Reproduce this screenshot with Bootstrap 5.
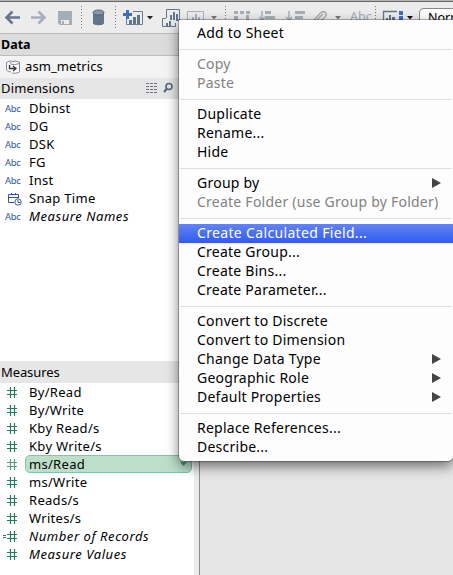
<!DOCTYPE html>
<html lang="en">
<head>
<meta charset="utf-8">
<title>Data pane</title>
<link href="https://cdn.jsdelivr.net/npm/bootstrap@5.3.0/dist/css/bootstrap.min.css" rel="stylesheet">
<style>
body{font-family:"Noto Sans","Open Sans",sans-serif;font-size:13px;line-height:18px;color:#000;background:#e6e6e6;width:453px;height:575px}
svg{display:block;flex:none}
.toolbar{height:34px;background:#ececec;border-top:1px solid #b4b4b0;border-bottom:1px solid #bcbcbc;box-shadow:inset 0 1px #686868}
.pane{width:200px;height:541px;background:#fff;border-right:1px solid #8c8c8c}
.pane-inner{width:194px}
.pane-title{height:22px;background:#dcdcdc;border-bottom:1px solid #bdbdbd;font-size:12.5px;padding-left:1px}
.pane-title span{margin-top:1px}
.source{height:22px;background:#f3f3f3;padding-left:6px}
.source-name{margin:-2px 0 0 4px;letter-spacing:.1px}
.section-title{height:21px;background:#e6e6e6;padding:0 0 2px 1px;width:199px;letter-spacing:.15px}
.measures-title{height:22px;padding-bottom:0;letter-spacing:-.1px}
.dimensions{height:262px}
.field{height:18px}
.kind{width:25px;flex:none;color:#31589c}
.abc{font-size:9.5px;padding-left:5px;letter-spacing:-.3px;line-height:19px}
.field-name{height:18px;line-height:19px;padding-left:4px;border:1px solid transparent;border-width:0 0 0 1px;margin-left:-1px;white-space:nowrap;letter-spacing:.3px}
.field-name.fst-italic{letter-spacing:.56px}
.picked{width:167px;margin-left:0;padding-left:3px;border:1px solid #7bc8ae;border-radius:5px;background:#bddec9;line-height:17px}
.gutter{width:5px;background:#ebebeb;height:192px}
.ctx{left:179px;top:20px;width:274px;height:441px;padding:4px 0;background:#fdfdfd;border-radius:0 0 5px 5px;box-shadow:0 0 0 1px rgba(0,0,0,.25),0 5px 13px rgba(0,0,0,.55);font-size:14px;line-height:17px;letter-spacing:.24px}
.ctx-item{height:19px;padding:0 12px 0 18px;white-space:nowrap}
.ctx-off{color:#828282}
.ctx-on{background:linear-gradient(#6384f1,#315bee);color:#fff;letter-spacing:.34px}
.ctx-rule{height:1px;margin:6px 1px 5px;background:#dedede}
.zoom-box{left:419px;top:7px;width:34px;height:24px;background:#fff;border:1px solid #888;border-right:0;border-radius:5px 0 0 5px;padding:0 0 0 8px;font-size:12.5px;line-height:18px;overflow:hidden}
.tool-abc{left:350px;top:7px;font-size:12.5px;color:#a2abb6}
</style>
</head>
<body class="position-relative overflow-hidden">
<header class="toolbar position-relative">
<svg width="453" height="32" viewBox="0 1 453 32">
<g fill="none" stroke="#66788e" stroke-width="2.6"><path d="M6 17.5H20M12.5 11.5L6.5 17.5L12.5 23.5"/><path stroke="#a5afba" d="M45 17.5H31M38.500 11.5L44.500 17.5L38.500 23.5"/></g>
<path fill="#a4aeb9" d="M58 11H72V25H60L58 23Z"/><path fill="#ececec" d="M61 20H69V24H61Z"/><path fill="#a4aeb9" d="M62 21H64V24H62Z"/>
<path fill="#64758a" d="M93 12V23C93 26 104 26 104 23V12Z"/><ellipse cx="98.500" cy="12.500" rx="5.500" ry="2.500" fill="#8996a8" stroke="#56677c"/>
<g stroke="#777" stroke-dasharray="1 2"><path d="M81.500 6V28M115.500 6V28M225.500 6V28M375.500 6V28"/></g>
<path fill="none" stroke="#6e7e92" d="M133 11.500H142.500V24.500H126.500V19"/><path fill="#64758a" d="M129 20h3v4h-3zM133 17h3v7h-3zM137 15h3v9h-3z"/><path fill="#3e70b7" d="M126 10h3v3h3v3h-3v3h-3v-3h-3v-3h3z"/>
<path fill="#222" d="M147 16h6l-3 3.500z"/>
<path fill="none" stroke="#64758a" d="M166.500 18V9.500H179.500V20.500H176M166 18.500H162.500V26.500H175.500V23"/><path fill="#64758a" d="M170 15h2v5h-2zM173 12h2v8h-2zM176 14h2v6h-2zM166 23h2v3h-2zM169 21h2v5h-2z"/>
<path fill="none" stroke="#a9b2bc" d="M187.500 25V11.500H203.500V25"/><path fill="#a9b2bc" d="M192 17h2v5h-2zM195 14h2v8h-2zM198 17h2v5h-2z"/>
<path fill="#777" d="M211 16h6l-3 3.500z"/>
<g fill="#a5afba"><path d="M234 11h4v3h-4zM240 11h4v3h-4zM246 11h4v3h-4zM234 16h4v5h-4zM246 15h3v5h-3zM265 11h6v3h-6zM265 16h10v3h-10zM295 11h10v3h-10zM295 16h8v3h-8z"/></g>
<g fill="none" stroke="#a5afba" stroke-width="1.500"><path d="M262 11V20M259 17l3 3l3-3M289 11V20M286 17l3 3l3-3"/><path stroke="#aaa" d="M314 20L321 12.500Q324 10.500 326 13Q327 15 325 17L319 22M317 20L323 14"/></g>
<path fill="#777" d="M335 16h6l-3 3.500z"/>
<path fill="none" stroke="#64758a" stroke-width="1.300" d="M397 11.500H383.500V24H397"/><path fill="#64758a" d="M386 18h2v3h-2zM389 15h2v6h-2zM392 17h3v4h-3z"/><path fill="#3e70b7" d="M399 11h4v4h-4zM399 16h4v4h-4z"/>
<path fill="#111" d="M407 16h6l-3 3.500z"/>
</svg>
<span class="tool-abc position-absolute">Abc</span>
<div class="zoom-box position-absolute">Norm</div>
</header>
<main class="pane">
<div class="pane-title fw-bold d-flex align-items-center"><span>Data</span></div>
<div class="source d-flex align-items-center"><svg width="15" height="15" viewBox="0 0 15 15" fill="none" stroke="#7e8a9a"><path fill="#fff" d="M4.500 3.500V2Q9 0 13.500 2V12Q10 14 6 13"/><path fill="#fff" d="M.5 2.500Q4-.5 8.500 2M.5 2.500V10Q2 12 5 12M4.500 4Q8 5.500 13.500 3.500"/><path stroke="#333" stroke-width="1.300" d="M3.500 5V8.500H9.500M7 6l3 2.500L7 11"/></svg><span class="source-name">asm_metrics</span></div>
<div class="section-title d-flex align-items-center"><span class="flex-grow-1">Dimensions</span>
<svg width="29" height="12" viewBox="0 0 29 12" class="me-4"><path stroke="#6d7680" stroke-dasharray="3 1" d="M0 1.500H12M0 4.500H12M0 7.500H12M0 10.500H12"/><circle cx="23" cy="4.500" r="3" fill="none" stroke="#536276" stroke-width="1.500"/><path stroke="#536276" stroke-width="2" d="M21 6.500L18 10"/></svg></div>
<div class="dimensions">
<div class="field d-flex"><span class="kind abc">Abc</span><span class="field-name">Dbinst</span></div>
<div class="field d-flex"><span class="kind abc">Abc</span><span class="field-name">DG</span></div>
<div class="field d-flex"><span class="kind abc">Abc</span><span class="field-name">DSK</span></div>
<div class="field d-flex"><span class="kind abc">Abc</span><span class="field-name">FG</span></div>
<div class="field d-flex"><span class="kind abc">Abc</span><span class="field-name">Inst</span></div>
<div class="field d-flex"><span class="kind ps-2 pt-1"><svg width="14" height="13" viewBox="-1 1 14 13" fill="none" stroke="#31589c"><path d="M5 10.500H-.5M-.5 2.500H9.500V6M0 5.500H9M2.500 1V3M6.500 1V3M-.5 2.500V10.500"/><circle cx="9" cy="10" r="3.200"/><path d="M9 8V10.500H11"/></svg></span><span class="field-name">Snap Time</span></div>
<div class="field d-flex"><span class="kind abc">Abc</span><span class="field-name fst-italic">Measure Names</span></div>
</div>
<div class="section-title measures-title d-flex align-items-center">Measures</div>
<svg width="0" height="0"><symbol id="hash" viewBox="0 0 17 18"><path stroke="currentColor" stroke-width="1.200" d="M7 7.500H17M7 11.500H17M10.500 4V15M14.500 4V15"/></symbol></svg>
<div class="d-flex"><div class="pane-inner measures">
<div class="field d-flex"><span class="kind"><svg width="17" height="18" color="#247a62"><use href="#hash"/></svg></span><span class="field-name">By/Read</span></div>
<div class="field d-flex"><span class="kind"><svg width="17" height="18" color="#247a62"><use href="#hash"/></svg></span><span class="field-name">By/Write</span></div>
<div class="field d-flex"><span class="kind"><svg width="17" height="18" color="#247a62"><use href="#hash"/></svg></span><span class="field-name">Kby Read/s</span></div>
<div class="field d-flex"><span class="kind"><svg width="17" height="18" color="#247a62"><use href="#hash"/></svg></span><span class="field-name">Kby Write/s</span></div>
<div class="field d-flex"><span class="kind"><svg width="17" height="18" color="#5a9a8a"><use href="#hash"/></svg></span><span class="field-name picked d-flex justify-content-between">ms/Read<svg width="12" height="16"><path fill="#3f9780" d="M1 6h7l-3.500 4z"/></svg></span></div>
<div class="field d-flex"><span class="kind"><svg width="17" height="18" color="#247a62"><use href="#hash"/></svg></span><span class="field-name">ms/Write</span></div>
<div class="field d-flex"><span class="kind"><svg width="17" height="18" color="#247a62"><use href="#hash"/></svg></span><span class="field-name">Reads/s</span></div>
<div class="field d-flex"><span class="kind"><svg width="17" height="18" color="#247a62"><use href="#hash"/></svg></span><span class="field-name">Writes/s</span></div>
<div class="field d-flex"><span class="kind"><svg width="17" height="18" color="#247a62"><use href="#hash"/><path stroke="currentColor" d="M3 8.500H6M3 10.500H6"/></svg></span><span class="field-name fst-italic">Number of Records</span></div>
<div class="field d-flex"><span class="kind"><svg width="17" height="18" color="#247a62"><use href="#hash"/></svg></span><span class="field-name fst-italic">Measure Values</span></div>
</div><div class="gutter"></div></div>
</main>
<nav class="ctx position-absolute">
<div class="ctx-item">Add to Sheet</div>
<div class="ctx-rule"></div>
<div class="ctx-item ctx-off">Copy</div>
<div class="ctx-item ctx-off">Paste</div>
<div class="ctx-rule"></div>
<div class="ctx-item">Duplicate</div>
<div class="ctx-item">Rename...</div>
<div class="ctx-item">Hide</div>
<div class="ctx-rule"></div>
<div class="ctx-item d-flex justify-content-between">Group by<svg width="9" height="14"><path fill="#444" d="M0 4L9 9L0 14z"/></svg></div>
<div class="ctx-item ctx-off">Create Folder (use Group by Folder)</div>
<div class="ctx-rule"></div>
<div class="ctx-item ctx-on">Create Calculated Field...</div>
<div class="ctx-item">Create Group...</div>
<div class="ctx-item">Create Bins...</div>
<div class="ctx-item">Create Parameter...</div>
<div class="ctx-rule"></div>
<div class="ctx-item">Convert to Discrete</div>
<div class="ctx-item">Convert to Dimension</div>
<div class="ctx-item d-flex justify-content-between">Change Data Type<svg width="9" height="14"><path fill="#444" d="M0 4L9 9L0 14z"/></svg></div>
<div class="ctx-item d-flex justify-content-between">Geographic Role<svg width="9" height="14"><path fill="#444" d="M0 4L9 9L0 14z"/></svg></div>
<div class="ctx-item d-flex justify-content-between">Default Properties<svg width="9" height="14"><path fill="#444" d="M0 4L9 9L0 14z"/></svg></div>
<div class="ctx-rule"></div>
<div class="ctx-item">Replace References...</div>
<div class="ctx-item">Describe...</div>
</nav>
<script src="https://cdn.jsdelivr.net/npm/bootstrap@5.3.0/dist/js/bootstrap.bundle.min.js"></script>
</body>
</html>
